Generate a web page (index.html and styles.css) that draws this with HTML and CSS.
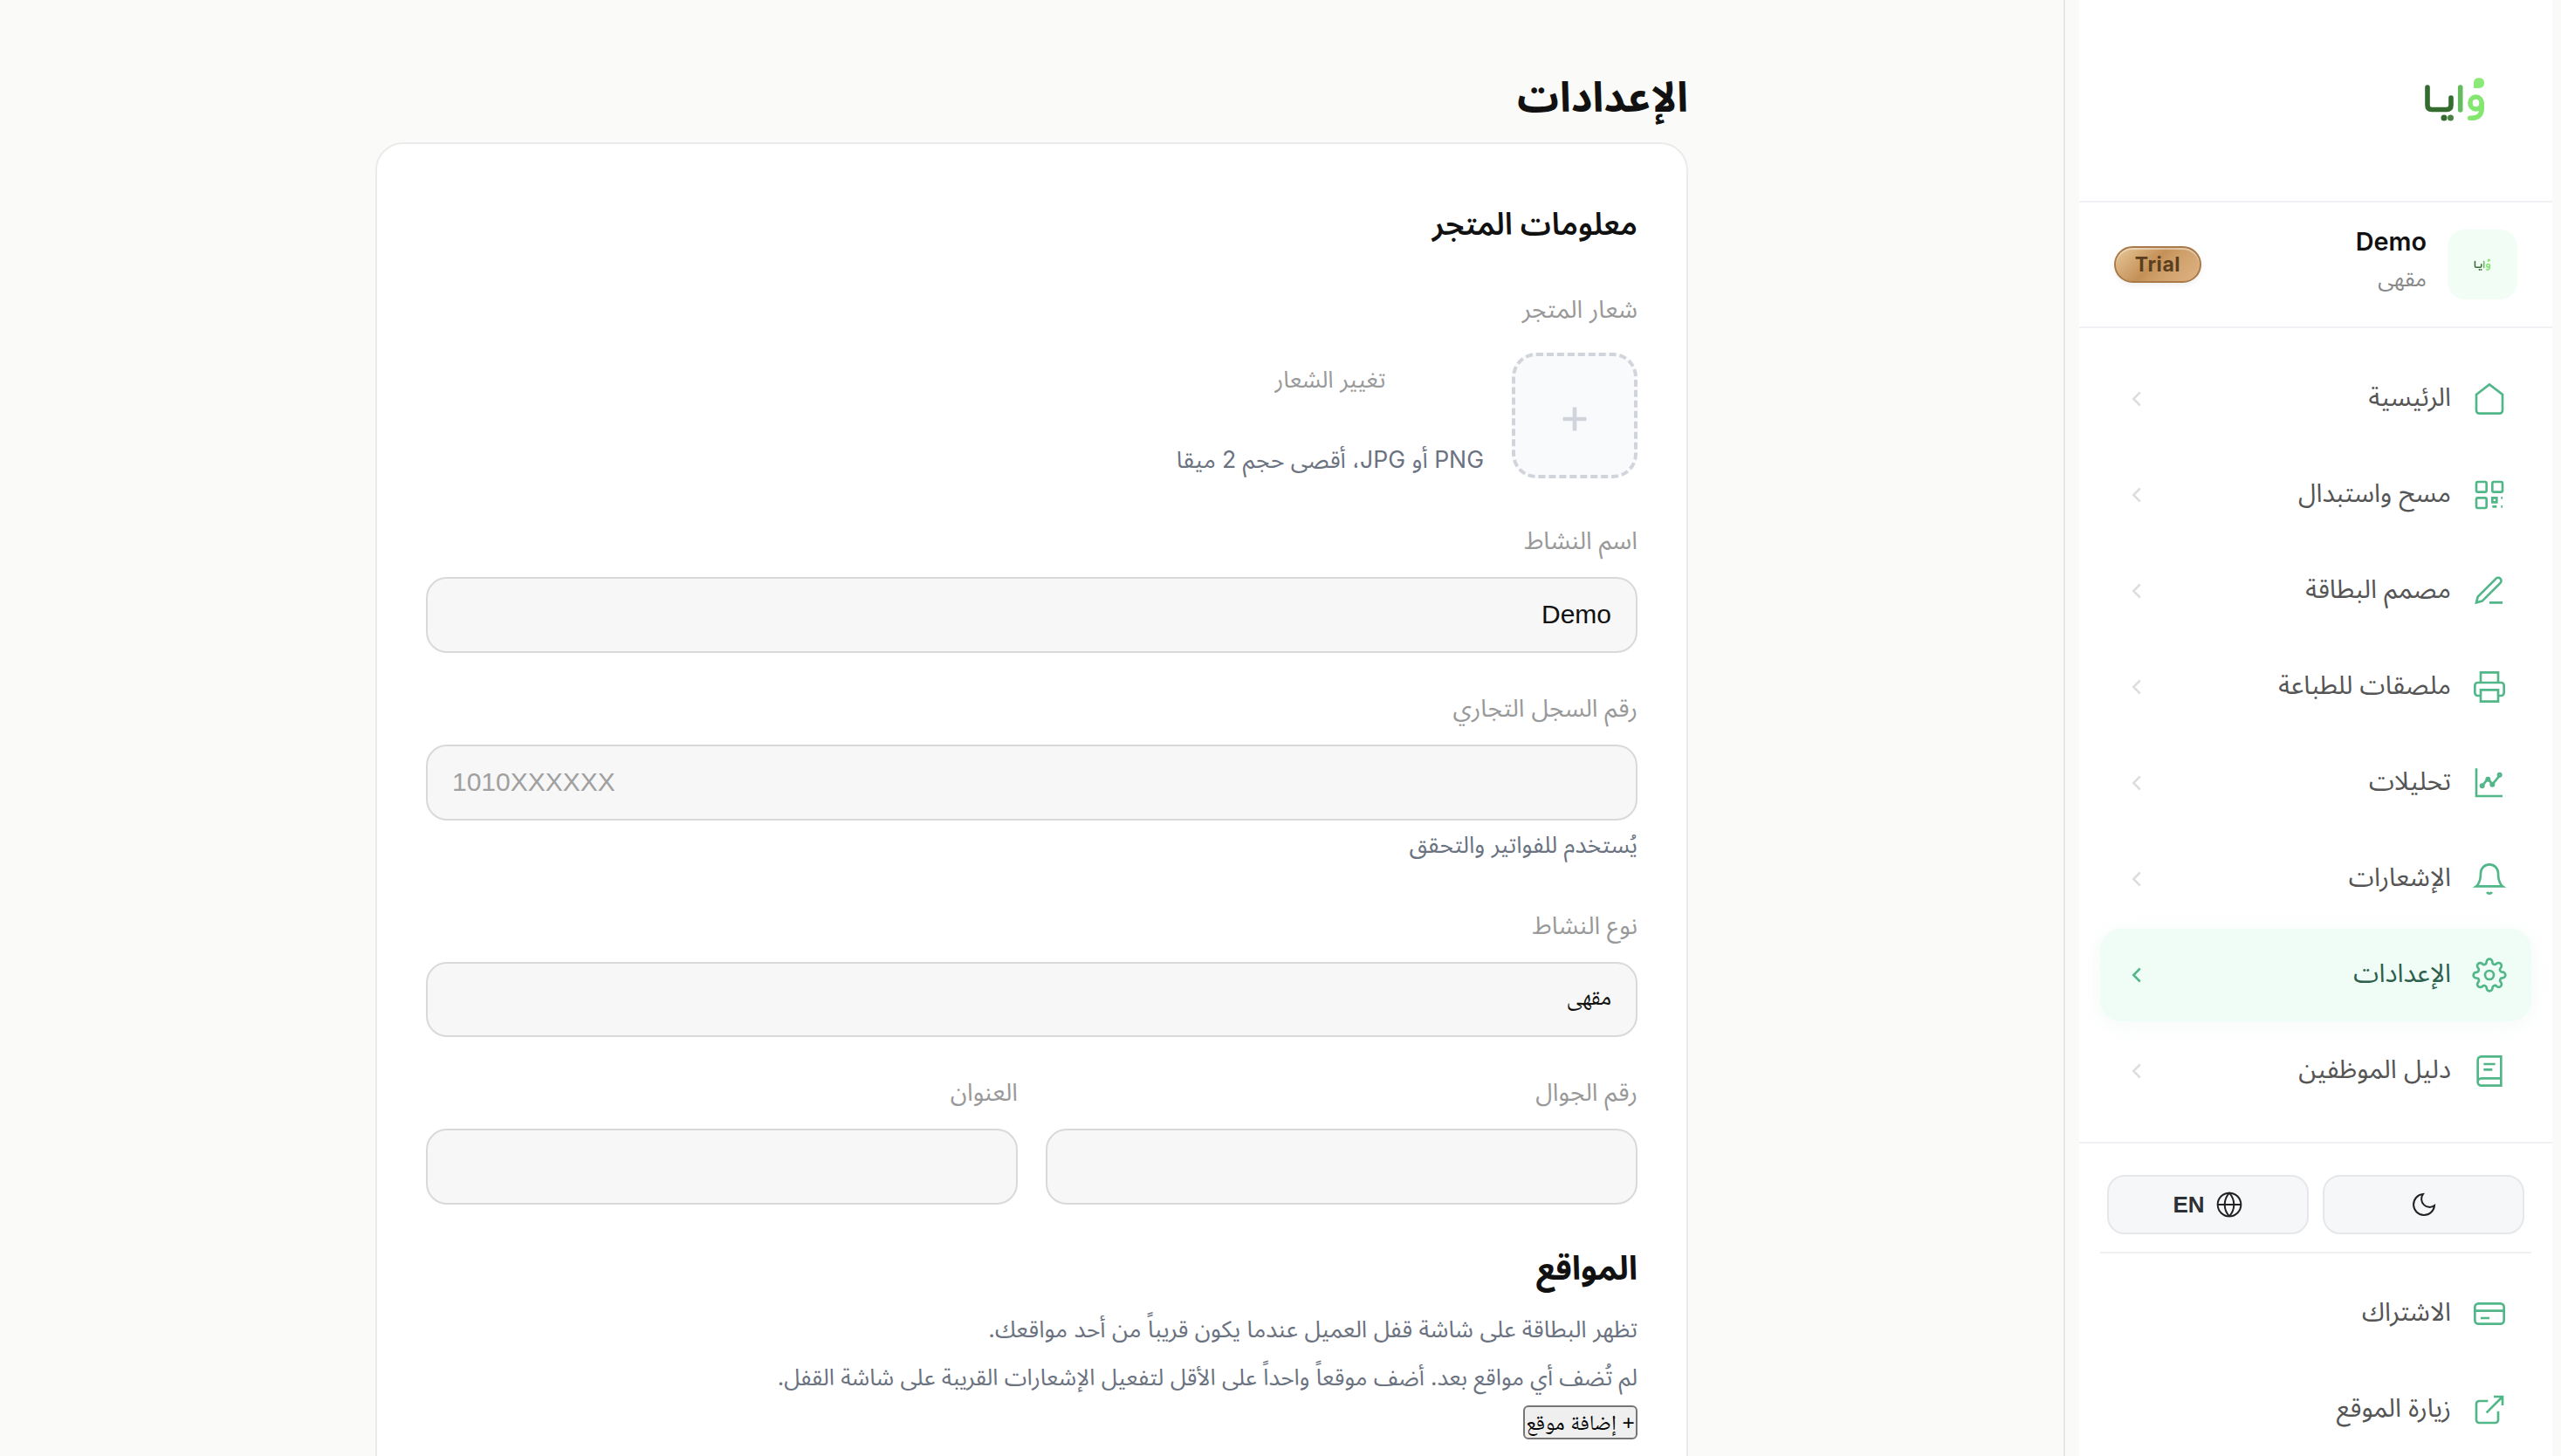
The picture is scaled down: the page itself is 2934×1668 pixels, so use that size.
FILE: index.html
```html
<!DOCTYPE html>
<html lang="ar" dir="rtl">
<head>
<meta charset="utf-8">
<title>الإعدادات</title>
<link rel="stylesheet" href="styles.css">
</head>
<body>
<svg width="0" height="0" class="defs" aria-hidden="true">
  <symbol id="logo" viewBox="0 0 95 70">
    <g fill="none" stroke-linecap="round" stroke-linejoin="round" stroke-width="5.6">
      <path stroke="#346b2f" d="M16 20v20.5q0 5 5 5h17q5 0 5-5V32"/>
      <path stroke="#66bb60" d="M53.700 20v26"/>
      <path stroke="#82e66f" d="M71.500 31a6.600 7 0 1 0 0 14a6.600 7 0 1 0 0-14M78.200 38v6q0 12-13.400 11.200"/>
    </g>
    <path fill="#8bea77" d="M69 21v-6q0-5.700 6-5.700t6 5.700t-6 6z"/>
    <circle cx="35" cy="55" r="3.500" fill="#346b2f"/>
    <circle cx="42.500" cy="55" r="3.500" fill="#47833f"/>
  </symbol>
  <symbol id="chev" viewBox="0 0 24 24"><path d="M15 18l-6-6 6-6"/></symbol>
</svg>
<div class="app">
  <aside class="sidebar">
    <div class="panel">
      <div class="brand"><svg class="brand-logo"><use href="#logo"/></svg></div>
      <div class="account">
        <div class="avatar"><svg class="avatar-logo"><use href="#logo"/></svg></div>
        <div class="who"><div class="who-name">Demo</div><div class="who-type">مقهى</div></div>
        <span class="badge">Trial</span>
      </div>
      <nav class="nav">
        <a class="item"><svg class="ico" viewBox="0 0 24 24"><path d="M3 9l9-7 9 7v11a2 2 0 0 1-2 2H5a2 2 0 0 1-2-2z"/></svg><span class="txt">الرئيسية</span><svg class="chev"><use href="#chev"/></svg></a>
        <a class="item"><svg class="ico" viewBox="0 0 24 24"><rect x="3" y="3" width="7" height="7" rx="1"/><rect x="14" y="3" width="7" height="7" rx="1"/><rect x="3" y="14" width="7" height="7" rx="1"/><path d="M14 14h3v3h-3zM20 14h1M14 20h3M20 20h1"/></svg><span class="txt">مسح واستبدال</span><svg class="chev"><use href="#chev"/></svg></a>
        <a class="item"><svg class="ico" viewBox="0 0 24 24"><path d="M12 20h9M16.500 3.500a2.120 2.120 0 0 1 3 3L7 19l-4 1 1-4z"/></svg><span class="txt">مصمم البطاقة</span><svg class="chev"><use href="#chev"/></svg></a>
        <a class="item"><svg class="ico" viewBox="0 0 24 24"><path d="M6 9V2h12v7M6 18H4a2 2 0 0 1-2-2v-5a2 2 0 0 1 2-2h16a2 2 0 0 1 2 2v5a2 2 0 0 1-2 2h-2M6 14h12v8H6z"/></svg><span class="txt">ملصقات للطباعة</span><svg class="chev"><use href="#chev"/></svg></a>
        <a class="item"><svg class="ico" viewBox="0 0 24 24"><path d="M3 2v19h18M7 14l4-5 3 4 5-6"/><circle cx="7" cy="14" r="1"/><circle cx="11" cy="9.500" r="1"/><circle cx="14" cy="13" r="1"/><circle cx="19" cy="6.500" r="1"/></svg><span class="txt">تحليلات</span><svg class="chev"><use href="#chev"/></svg></a>
        <a class="item"><svg class="ico" viewBox="0 0 24 24"><path d="M18 8A6 6 0 0 0 6 8c0 7-3 9-3 9h18s-3-2-3-9M13.730 21a2 2 0 0 1-3.460 0"/></svg><span class="txt">الإشعارات</span><svg class="chev"><use href="#chev"/></svg></a>
        <a class="item active"><svg class="ico" viewBox="0 0 24 24"><circle cx="12" cy="12" r="3"/><path d="M19.400 15a1.650 1.650 0 0 0 .33 1.820l.06.06a2 2 0 0 1 0 2.830 2 2 0 0 1-2.830 0l-.06-.06a1.650 1.650 0 0 0-1.820-.33 1.650 1.650 0 0 0-1 1.510V21a2 2 0 0 1-2 2 2 2 0 0 1-2-2v-.09A1.650 1.650 0 0 0 9 19.400a1.650 1.650 0 0 0-1.820.33l-.06.06a2 2 0 0 1-2.830 0 2 2 0 0 1 0-2.830l.06-.06a1.650 1.650 0 0 0 .33-1.820 1.650 1.650 0 0 0-1.510-1H3a2 2 0 0 1-2-2 2 2 0 0 1 2-2h.09A1.650 1.650 0 0 0 4.600 9a1.650 1.650 0 0 0-.33-1.820l-.06-.06a2 2 0 0 1 0-2.830 2 2 0 0 1 2.830 0l.06.06a1.650 1.650 0 0 0 1.820.33H9a1.650 1.650 0 0 0 1-1.510V3a2 2 0 0 1 2-2 2 2 0 0 1 2 2v.09a1.650 1.650 0 0 0 1 1.510 1.650 1.650 0 0 0 1.820-.33l.06-.06a2 2 0 0 1 2.830 0 2 2 0 0 1 0 2.830l-.06.06a1.650 1.650 0 0 0-.33 1.820V9a1.650 1.650 0 0 0 1.510 1H21a2 2 0 0 1 2 2 2 2 0 0 1-2 2h-.09a1.650 1.650 0 0 0-1.510 1z"/></svg><span class="txt">الإعدادات</span><svg class="chev"><use href="#chev"/></svg></a>
        <a class="item"><svg class="ico" viewBox="0 0 24 24"><path d="M4 19.500A2.500 2.500 0 0 1 6.500 17H20M6.500 2H20v20H6.500A2.500 2.500 0 0 1 4 19.500v-15A2.500 2.500 0 0 1 6.500 2zM8 7.200h8M8 11h6"/></svg><span class="txt">دليل الموظفين</span><svg class="chev"><use href="#chev"/></svg></a>
      </nav>
      <div class="foot">
        <div class="toggles">
          <button class="toggle"><svg class="tico" viewBox="0 0 24 24"><path d="M21 12.790A9 9 0 1 1 11.210 3 7 7 0 0 0 21 12.790z"/></svg></button>
          <button class="toggle"><svg class="tico" viewBox="0 0 24 24"><circle cx="12" cy="12" r="10"/><path d="M2 12h20M12 2a15.300 15.300 0 0 1 4 10 15.300 15.300 0 0 1-4 10 15.300 15.300 0 0 1-4-10 15.300 15.300 0 0 1 4-10z"/></svg><span>EN</span></button>
        </div>
        <div class="links">
          <a class="item"><svg class="ico" viewBox="0 0 24 24"><rect x="2" y="5" width="20" height="14" rx="2.500"/><path d="M2 10h20M6 15h6"/></svg><span class="txt">الاشتراك</span></a>
          <a class="item"><svg class="ico" viewBox="0 0 24 24"><path d="M18 13v6a2 2 0 0 1-2 2H5a2 2 0 0 1-2-2V8a2 2 0 0 1 2-2h6M15 3h6v6M10 14L21 3"/></svg><span class="txt">زيارة الموقع</span></a>
        </div>
      </div>
    </div>
  </aside>
  <main class="main">
    <div class="page">
      <h1 class="title">الإعدادات</h1>
      <section class="card">
        <h2 class="heading">معلومات المتجر</h2>
        <div class="field logo-field">
          <label class="label">شعار المتجر</label>
          <div class="upload">
            <div class="drop"><svg class="plus" viewBox="0 0 28 28"><path d="M14 .500v27M.500 14h27"/></svg></div>
            <div class="upload-side">
              <span class="label change">تغيير الشعار</span>
              <p class="hint">PNG أو JPG، أقصى حجم 2 ميقا</p>
            </div>
          </div>
        </div>
        <div class="field">
          <label class="label">اسم النشاط</label>
          <div class="input">Demo</div>
        </div>
        <div class="field near">
          <label class="label">رقم السجل التجاري</label>
          <div class="input code" dir="ltr">1010XXXXXX</div>
          <p class="hint below">يُستخدم للفواتير والتحقق</p>
        </div>
        <div class="field">
          <label class="label">نوع النشاط</label>
          <div class="input select">مقهى</div>
        </div>
        <div class="pair">
          <div class="field near"><label class="label">رقم الجوال</label><div class="input"></div></div>
          <div class="field near"><label class="label">العنوان</label><div class="input"></div></div>
        </div>
        <h2 class="heading places">المواقع</h2>
        <p class="hint lead">تظهر البطاقة على شاشة قفل العميل عندما يكون قريباً من أحد مواقعك.</p>
        <p class="hint empty">لم تُضف أي مواقع بعد. أضف موقعاً واحداً على الأقل لتفعيل الإشعارات القريبة على شاشة القفل.</p>
        <button class="add">+ إضافة موقع</button>
      </section>
    </div>
  </main>
</div>
</body>
</html>
```
FILE: styles.css
```css
* { box-sizing: border-box; margin: 0; padding: 0; }
html, body { height: 1668px; overflow: hidden; }
body { background: #fafaf8; color: #111; font-family: Inter, "Noto Sans Arabic", "Noto Sans", sans-serif; }
.defs { display: block; height: 0; }
.app { display: flex; height: 1668px; overflow: hidden; }

.sidebar { width: 570px; flex: none; border-left: 2px solid #e5e7eb; padding: 0 10px 0 16px; }
.panel { background: #fff; height: 1668px; overflow: hidden; }
.brand { height: 232px; border-bottom: 2px solid #f0f0f5; padding: 80px 64px 0 0; }
.brand-logo { display: block; width: 95px; height: 70px; }
.account { height: 144px; border-bottom: 2px solid #f0f0f5; padding: 0 40px; display: flex; align-items: center; gap: 24px; }
.avatar { width: 80px; height: 80px; border-radius: 20px; background: #f2fdf5; display: flex; align-items: center; justify-content: center; }
.avatar-logo { width: 26px; height: 19px; }
.who { flex: 1; margin-bottom: 10px; }
.who-name { font-size: 28.8px; font-weight: 600; line-height: 42px; }
.who-type { font-size: 24.6px; line-height: 42px; color: #888; }
.badge { width: 100px; height: 42px; border-radius: 21px; border: 2px solid #a97a48; display: flex; align-items: center; justify-content: center; font-size: 23px; font-weight: 700; letter-spacing: .6px; color: #5a3e1e; background: linear-gradient(135deg, #e8c898 0%, #c49058 45%, #cf9f69 60%, #deb384 100%); box-shadow: inset 0 2px 1px rgba(255,255,255,.45), 0 3px 6px rgba(0,0,0,.06); }
.nav { padding: 28px 24px; display: flex; flex-direction: column; gap: 4px; height: 932px; }
.item { height: 106px; flex: none; border-radius: 24px; padding: 0 28px; display: flex; align-items: center; gap: 24px; font-size: 29.4px; line-height: 44px; color: #555; }
.txt { flex: 1; padding-bottom: 4px; }
.ico { width: 40px; height: 40px; fill: none; stroke: #52b788; stroke-width: 1.6; }
.chev { width: 30px; height: 30px; margin-left: -1px; fill: none; stroke: #ddd; stroke-width: 2; }
.active { background: #effdf6; color: #2d5f4c; box-shadow: 0 4px 24px rgba(82,183,136,.07); }
.active .chev { stroke: #52b788; }
.foot { border-top: 2px solid #f0f0f5; padding: 0 24px; }
.toggles { height: 126px; padding: 36px 8px 0; display: flex; gap: 16px; border-bottom: 2px solid #f0f0f3; }
.toggle { flex: 1; height: 68px; border: 2px solid #e5e7eb; border-radius: 20px; background: #f6f7f9; color: #2d3035; display: flex; align-items: center; justify-content: center; gap: 12px; font: 700 26px "Liberation Sans", sans-serif; }
.tico { width: 32px; height: 32px; fill: none; stroke: #222; stroke-width: 1.5; }
.links { padding-top: 16px; display: flex; flex-direction: column; gap: 4px; }

.main { flex: 1; }
.page { width: 1504px; margin: 0 auto; padding-top: 73px; }
.title { font-size: 47.6px; font-weight: 700; line-height: 76px; margin-bottom: 14px; }
.card { background: #fff; border: 2px solid #ebebeb; border-radius: 32px; padding: 57px 56px; height: 1700px; }
.heading { font-size: 35.2px; font-weight: 600; line-height: 69px; }
.label { display: block; font-size: 28px; line-height: 44px; color: #999; }
.label.change { font-size: 26.6px; }
.hint { font-size: 26.6px; line-height: 44px; color: #6b7280; }
.field { margin-top: 49px; }
.field.near { margin-top: 41px; }
.field.logo-field { margin-top: 41px; }
.upload { display: flex; gap: 32px; margin-top: 28px; height: 144px; }
.drop { width: 144px; height: 144px; border: 4px dashed #d1d5db; border-radius: 28px; background: #f9fafb; display: flex; align-items: center; justify-content: center; padding-top: 8px; }
.plus { width: 28px; height: 28px; stroke: #d1d5db; stroke-width: 4.6; }
.upload-side { display: flex; flex-direction: column; justify-content: space-between; align-items: center; padding-top: 8px; }
.input { margin-top: 20px; height: 87px; border: 2px solid #d9d9d9; border-radius: 24px; background: #f7f7f7; padding: 0 28px; font: 30px/82px "Liberation Sans", sans-serif; color: #111; }
.input.code { color: #a0a0a0; }
.input.select { height: 86px; font: 27px/82px "Noto Naskh Arabic", "Noto Sans Arabic", serif; }
.below { margin-top: 5px; }
.pair { display: grid; grid-template-columns: 1fr 1fr; gap: 32px; }
.places { margin-top: 42px; font-size: 37.8px; font-weight: 700; line-height: 60px; }
.lead { margin-top: 18px; }
.empty { margin-top: 12px; font-size: 26px; }
.add { display: block; margin-top: 10px; width: 131px; height: 39px; border: 2px solid #767676; border-radius: 6px; background: #efefef; color: #000; font: 24.4px/32px "Liberation Sans", "Noto Naskh Arabic", sans-serif; white-space: nowrap; }
```
